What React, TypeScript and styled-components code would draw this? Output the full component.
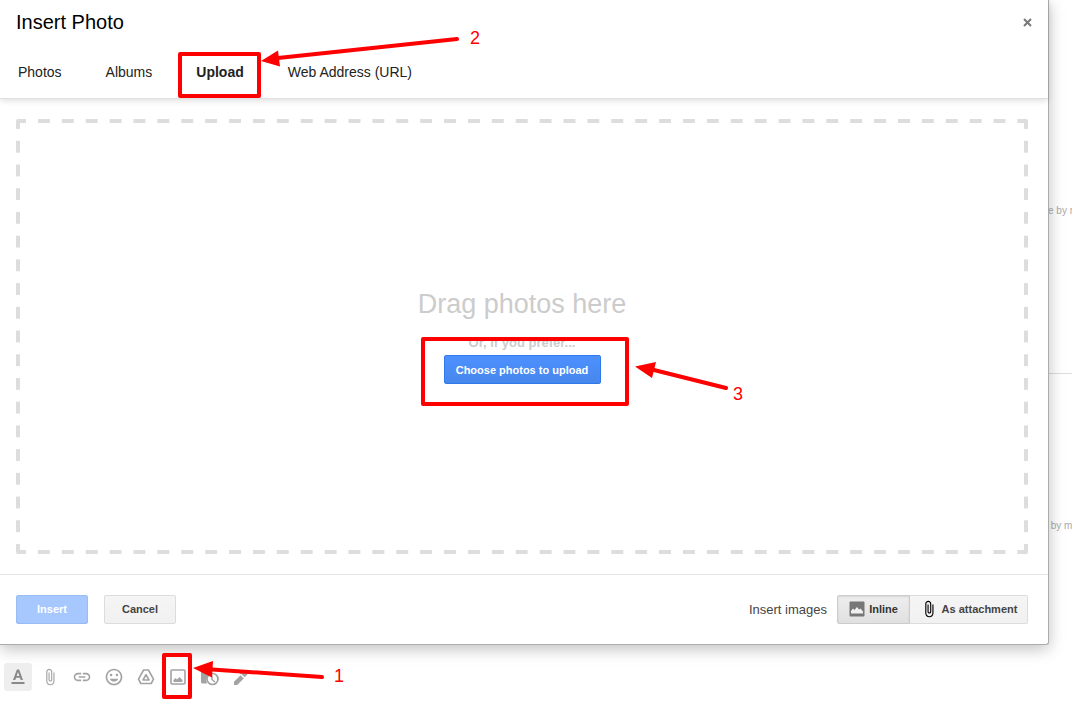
import React from "react";
import styled, { createGlobalStyle, css } from "styled-components";
import { MdAttachFile, MdInsertLink, MdOutlineInsertEmoticon } from "react-icons/md";

const GlobalStyle = createGlobalStyle`
  * { box-sizing: border-box; }
  body { margin: 0; background: #fff; font-family: "Liberation Sans", Arial, sans-serif; }
  button { font-family: inherit; cursor: pointer; }
`;

const Page = styled.div`
  position: relative;
  display: grid;
  grid-template-rows: 1fr auto;
  min-height: 100vh;
  overflow: hidden;
`;

const Stage = styled.div`
  display: grid;
  grid-template-columns: 1fr 23px;
`;

const Dialog = styled.section`
  position: relative;
  z-index: 1;
  display: flex;
  flex-direction: column;
  background: #fff;
  border: 1px solid #acacac;
  border-width: 0 1px 1px 0;
  border-radius: 0 0 3px 0;
  box-shadow: 0 4px 16px rgba(0, 0, 0, 0.25);
`;

const Header = styled.header`
  border-bottom: 1px solid #e0e0e0;
  box-shadow: 0 2px 6px rgba(0, 0, 0, 0.12);
`;

const TitleRow = styled.div`
  display: flex;
  align-items: center;
  justify-content: space-between;
  height: 44px;
  padding: 0 16px;
`;

const Title = styled.h1`
  margin: 0;
  font-size: 20px;
  font-weight: 400;
  line-height: 24px;
  color: #000;
`;

const CloseButton = styled.button`
  display: flex;
  padding: 0;
  border: 0;
  background: none;
`;

const Tabs = styled.nav`
  display: flex;
  gap: 44px;
  height: 54px;
  padding: 0 18px;
`;

const Tab = styled.button<{ $active?: boolean }>`
  padding: 2px 0 0;
  border: 0;
  background: none;
  font-size: 14px;
  font-weight: ${(p) => (p.$active ? 700 : 400)};
  color: #222;
`;

const Body = styled.main`
  flex: 1;
  display: flex;
  padding: 20px;
  padding-left: 16px;
`;

const dashX = "linear-gradient(90deg, #ddd 25%, transparent 25% 75%, #ddd 75%)";
const dashY = "linear-gradient(180deg, #ddd 25%, transparent 25% 75%, #ddd 75%)";

const DropZone = styled.div`
  flex: 1;
  display: flex;
  flex-direction: column;
  align-items: center;
  justify-content: center;
  padding-bottom: 2px;
  border: 4px solid transparent;
  border-radius: 2px;
  background-image: ${dashX}, ${dashX}, ${dashY}, ${dashY};
  background-size: 24px 4px, 24px 4px, 4px 24px, 4px 24px;
  background-repeat: round no-repeat, round no-repeat, no-repeat round, no-repeat round;
  background-position: 0 -4px, 0 calc(100% + 4px), -4px 0, calc(100% + 4px) 0;
  background-origin: padding-box;
  background-clip: border-box;
`;

const DropTitle = styled.h2`
  margin: 0 0 15px;
  font-size: 27px;
  font-weight: 400;
  line-height: 32px;
  color: #ccc;
`;

const DropHint = styled.p`
  margin: 0 0 4px;
  font-size: 13px;
  font-weight: 700;
  line-height: 16px;
  color: #ccc;
`;

const tones = {
  primary: css`
    padding: 2px 8px 0;
    border-color: #3079ed;
    background: linear-gradient(#4d90fe, #4787ed);
    color: #fff;
  `,
  faded: css`
    border-color: #98bcf6;
    background: #a6c8ff;
    color: #fff;
  `,
  plain: css`
    border-color: #dcdcdc;
    background: linear-gradient(#f5f5f5, #f1f1f1);
    color: #444;
  `,
  pressed: css`
    border-color: #ccc;
    background: linear-gradient(#eee, #e0e0e0);
    box-shadow: inset 0 1px 2px rgba(0, 0, 0, 0.1);
    color: #333;
  `,
};

const Button = styled.button<{ $tone: keyof typeof tones; $width?: number }>`
  display: inline-flex;
  align-items: center;
  justify-content: center;
  gap: 4px;
  height: 29px;
  min-width: ${(p) => p.$width ?? 72}px;
  padding: 0 8px 1px;
  border: 1px solid;
  border-radius: 2px;
  font-size: 11px;
  font-weight: 700;
  white-space: nowrap;
  ${(p) => tones[p.$tone]}
`;

const Footer = styled.footer`
  display: flex;
  align-items: center;
  gap: 16px;
  padding: 20px 20px 20px 16px;
  border-top: 1px solid #e5e5e5;
`;

const InsertMode = styled.div`
  display: flex;
  align-items: center;
  gap: 10px;
  margin-left: auto;
  font-size: 13px;
  line-height: 16px;
  color: #444;
`;

const Segmented = styled.div`
  display: flex;

  & > button:first-child { border-radius: 2px 0 0 2px; }
  & > button:last-child { margin-left: -1px; border-left-color: #ccc; border-radius: 0 2px 2px 0; }
`;

const Rail = styled.aside`
  overflow: hidden;
  font-size: 10px;
  line-height: 12px;
  text-indent: -1px;
  white-space: nowrap;
  color: #aaa;
`;

const RailEntry = styled.div<{ $top: number }>`
  padding-top: ${(p) => p.$top}px;

  &:first-child {
    padding-bottom: 156px;
    border-bottom: 1px solid #ddd;
  }
`;

const Toolbar = styled.div`
  display: flex;
  gap: 4px;
  padding: 18px 4px 13px;
`;

const ToolButton = styled.button<{ $active?: boolean }>`
  display: flex;
  align-items: center;
  justify-content: center;
  width: 28px;
  height: 28px;
  padding: 0;
  border: 0;
  border-radius: 3px;
  background: ${(p) => (p.$active ? "#eee" : "none")};
  color: ${(p) => (p.$active ? "#888" : "#a3a3a3")};
`;

const Notes = styled.div`
  position: absolute;
  inset: 0;
  z-index: 2;
  pointer-events: none;
`;

const NoteBox = styled.div<{ $x: number; $y: number; $w: number; $h: number }>`
  position: absolute;
  left: ${(p) => p.$x}px;
  top: ${(p) => p.$y}px;
  width: ${(p) => p.$w}px;
  height: ${(p) => p.$h}px;
  border: 4px solid #f00;
  border-radius: 2px;
`;

const NoteNumber = styled.span<{ $x: number; $y: number }>`
  position: absolute;
  left: ${(p) => p.$x}px;
  top: ${(p) => p.$y}px;
  font-size: 18px;
  line-height: 20px;
  color: #f00;
`;

const Arrows = styled.svg`
  position: absolute;
  inset: 0;
  width: 100%;
  height: 100%;
`;

const CloseIcon = () => (
  <svg width="9" height="9" viewBox="0 0 9 9" stroke="#777" strokeWidth="2">
    <path d="M1 1 8 8M8 1 1 8" />
  </svg>
);

const PictureIcon = () => (
  <svg width="16" height="16" viewBox="0 0 16 16">
    <rect x="0.5" y="0.5" width="15" height="15" rx="1" fill="#777" />
    <path d="M2 12.500V10l2-2.500 1.500 1.500L8 6l2 2.500L11.500 7.500 14 10.500v2z" fill="#f0f0f0" />
  </svg>
);

const TextIcon = () => (
  <svg width="20" height="20" viewBox="0 0 20 20" fill="currentColor">
    <path fillRule="evenodd" d="M8.900 2.500h2.200L15 13h-2.300l-.7-2.200H8L7.300 13H5zM10 4.900 8.600 9h2.800z" />
    <rect x="3.500" y="15" width="13" height="2" />
  </svg>
);

const DriveIcon = () => (
  <svg width="20" height="20" viewBox="0 0 20 20" fill="none" stroke="currentColor" strokeWidth="1.600" strokeLinejoin="round">
    <path d="M7.600 3h4.800L17.500 12.200 15.200 16.500H4.800L2.500 12.200z" />
    <path d="M10 7.600 13 13H7z" />
  </svg>
);

const PhotoIcon = () => (
  <svg width="20" height="20" viewBox="0 0 20 20">
    <rect x="3" y="3" width="14" height="14" rx="1" fill="none" stroke="currentColor" strokeWidth="1.600" />
    <path d="M5.500 15v-2l2-2 1.500 1.500 2.500-2.500 3 3v2z" fill="currentColor" />
  </svg>
);

const ScheduleIcon = () => (
  <svg width="20" height="20" viewBox="0 0 20 20" fill="none" stroke="currentColor">
    <path d="M1 3.500h6l1.500 2H12a8 8 0 0 0-5 11H2.500a1.500 1.500 0 0 1-1.500-1.500z" fill="currentColor" stroke="none" />
    <circle cx="12.500" cy="12" r="5.500" fill="#fff" strokeWidth="1.700" />
    <path d="M12 8.500V12.500L15 15" strokeWidth="1.400" />
  </svg>
);

const PenIcon = () => (
  <svg width="20" height="20" viewBox="0 0 20 20" fill="currentColor">
    <path d="M2 18v-3.200L8.600 8.200l3.200 3.200L5.200 18z" />
    <path d="M9.600 7.200 7.400 7 11 3.500l1.700 1.200 1.600-1.600a1 1 0 0 1 1.400 0l1.200 1.200a1 1 0 0 1 0 1.400L12.700 10.300z" />
  </svg>
);

const tools = [
  { label: "Formatting options", icon: <TextIcon />, active: true },
  { label: "Attach files", icon: <MdAttachFile size={18} /> },
  { label: "Insert link", icon: <MdInsertLink size={20} /> },
  { label: "Insert emoji", icon: <MdOutlineInsertEmoticon size={20} /> },
  { label: "Insert files using Drive", icon: <DriveIcon /> },
  { label: "Insert photo", icon: <PhotoIcon /> },
  { label: "Confidential mode", icon: <ScheduleIcon /> },
  { label: "Insert signature", icon: <PenIcon /> },
];

export default function App() {
  return (
    <Page>
      <GlobalStyle />
      <Stage>
        <Dialog role="dialog" aria-labelledby="dialog-title">
          <Header>
            <TitleRow>
              <Title id="dialog-title">Insert Photo</Title>
              <CloseButton aria-label="Close"><CloseIcon /></CloseButton>
            </TitleRow>
            <Tabs>
              <Tab>Photos</Tab>
              <Tab>Albums</Tab>
              <Tab $active aria-current="page">Upload</Tab>
              <Tab>Web Address (URL)</Tab>
            </Tabs>
          </Header>
          <Body>
            <DropZone>
              <DropTitle>Drag photos here</DropTitle>
              <DropHint>Or, if you prefer...</DropHint>
              <Button $tone="primary" $width={157}>Choose photos to upload</Button>
            </DropZone>
          </Body>
          <Footer>
            <Button $tone="faded">Insert</Button>
            <Button $tone="plain">Cancel</Button>
            <InsertMode>
              <span>Insert images</span>
              <Segmented>
                <Button $tone="pressed" $width={73} aria-pressed="true">
                  <PictureIcon />Inline
                </Button>
                <Button $tone="plain" $width={119} aria-pressed="false">
                  <MdAttachFile size={18} color="#000" />As attachment
                </Button>
              </Segmented>
            </InsertMode>
          </Footer>
        </Dialog>
        <Rail>
          <RailEntry $top={205}>e by m</RailEntry>
          <RailEntry $top={146}>&nbsp;by m</RailEntry>
        </Rail>
      </Stage>
      <Toolbar>
        {tools.map((t) => (
          <ToolButton key={t.label} $active={t.active} aria-label={t.label}>{t.icon}</ToolButton>
        ))}
      </Toolbar>
      <Notes>
        <NoteBox $x={162} $y={653} $w={30} $h={46} />
        <NoteBox $x={178} $y={52} $w={83} $h={46} />
        <NoteBox $x={421} $y={337} $w={208} $h={69} />
        <Arrows stroke="#f00" strokeWidth="4" strokeLinecap="round" fill="#f00">
          <path d="M322 677 212 669.500M457 39 278 58M726 388 654 370" />
          <path d="M193 668 213 661 212 677.500zM261 61 278 50.500 280 66.500zM635 366.500 656 362 652 378z" stroke="none" />
        </Arrows>
        <NoteNumber $x={334} $y={666}>1</NoteNumber>
        <NoteNumber $x={470} $y={28}>2</NoteNumber>
        <NoteNumber $x={733} $y={384}>3</NoteNumber>
      </Notes>
    </Page>
  );
}
